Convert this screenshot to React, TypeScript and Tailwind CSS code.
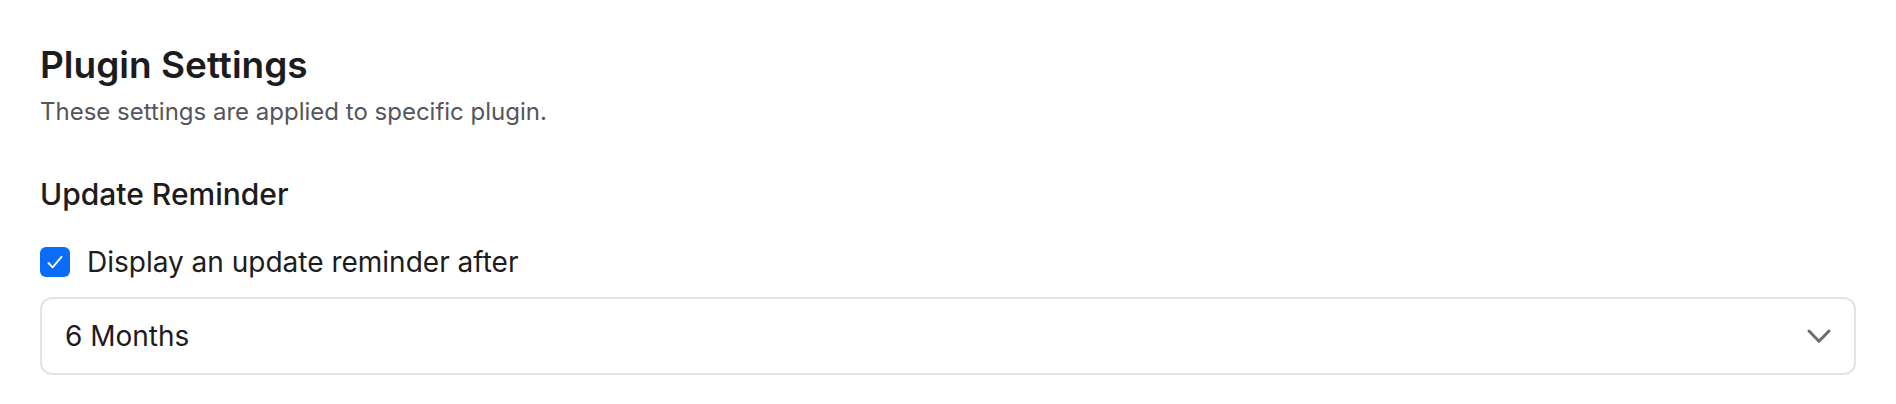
import { useState } from 'react';

export default function App() {
  const [remind, setRemind] = useState(true);
  const [period, setPeriod] = useState('6 Months');

  return (
    <main className="min-h-screen bg-white text-[#1c1c1e]" style={{ fontFamily: 'Inter, "Noto Sans", sans-serif' }}>
      <div className="px-[40px] pt-[43px]">
        <h2 className="text-[37px] leading-[44px] font-semibold">Plugin Settings</h2>
        <p className="mt-[7px] text-[24px] leading-[36px] text-[#55555b]">These settings are applied to specific plugin.</p>

        <h3 className="mt-[44px] text-[30px] leading-[40px] font-medium">Update Reminder</h3>

        <label className="mt-[28px] flex items-center gap-[17px] text-[28px] leading-[40px] cursor-pointer">
          <button
            type="button"
            onClick={() => setRemind(!remind)}
            className={remind ? 'flex h-[30px] w-[30px] shrink-0 items-center justify-center rounded-[6px] bg-[#0b6cf7]' : 'h-[30px] w-[30px] shrink-0 rounded-[6px] border-2 border-[#c7c7cc] bg-white'}
          >
            {remind && (
              <svg width="22" height="22" viewBox="0 0 22 22" fill="none">
                <path d="M4.5 12 8.6 16.3 17.5 5.8" stroke="white" strokeWidth="1.9" strokeLinecap="round" strokeLinejoin="round" />
              </svg>
            )}
          </button>
          <span>Display an update reminder after</span>
        </label>

        <div className="relative mt-[15px] h-[78px] w-full rounded-[12px] border-2 border-[#e3e3e6]">
          <select
            value={period}
            onChange={(e) => setPeriod(e.target.value)}
            className="h-full w-full appearance-none bg-transparent pl-[23px] text-[28px] text-[#1c1c1e] outline-none"
          >
            <option>1 Month</option>
            <option>3 Months</option>
            <option>6 Months</option>
            <option>12 Months</option>
          </select>
          <svg className="pointer-events-none absolute right-[22px] top-1/2 -translate-y-1/2" width="26" height="16" viewBox="0 0 26 16" fill="none">
            <path d="M3 3 13 13.2 23 3" stroke="#6c6c72" strokeWidth="3" strokeLinecap="round" strokeLinejoin="round" />
          </svg>
        </div>
      </div>
    </main>
  );
}
